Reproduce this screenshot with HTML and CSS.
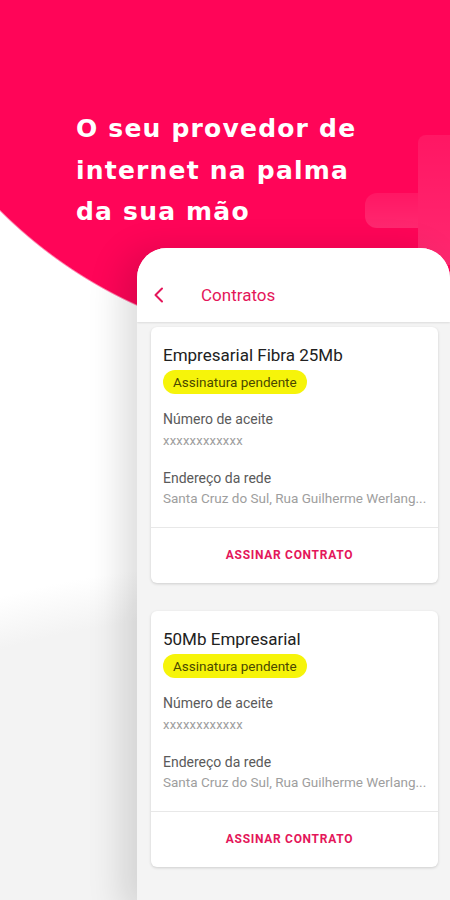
FILE: index.html
```html
<!DOCTYPE html>
<html lang="pt-BR">
<head>
    <meta charset="UTF-8">
    <meta name="viewport" content="width=device-width, initial-scale=1.0">
    <title>Contratos</title>
    <link rel="stylesheet" href="styles.css">
</head>
<body>
    <div class="page">
        <!-- decorative plus on the right of the pink area -->
        <div class="plus">
            <span class="plus-v"></span>
            <span class="plus-h"></span>
        </div>

        <h1 class="headline">O seu provedor de<br>internet na palma<br>da sua mão</h1>

        <div class="phone">
            <header class="app-bar">
                <svg class="back-icon" width="12" height="16" viewBox="0 0 12 16">
                    <path d="M9 1.5 L2.5 8 L9 14.5" fill="none" stroke="currentColor" stroke-width="2" stroke-linecap="round" stroke-linejoin="round"/>
                </svg>
                <span class="app-title">Contratos</span>
            </header>

            <main class="contract-list">
                <article class="contract-card">
                    <div class="card-body">
                        <h2 class="card-title">Empresarial Fibra 25Mb</h2>
                        <span class="status-badge">Assinatura pendente</span>
                        <div class="field">
                            <div class="field-label">Número de aceite</div>
                            <div class="field-value code">xxxxxxxxxxxx</div>
                        </div>
                        <div class="field">
                            <div class="field-label">Endereço da rede</div>
                            <div class="field-value">Santa Cruz do Sul, Rua Guilherme Werlang...</div>
                        </div>
                    </div>
                    <div class="card-action">
                        <button class="sign-btn">Assinar contrato</button>
                    </div>
                </article>

                <article class="contract-card">
                    <div class="card-body">
                        <h2 class="card-title">50Mb Empresarial</h2>
                        <span class="status-badge">Assinatura pendente</span>
                        <div class="field">
                            <div class="field-label">Número de aceite</div>
                            <div class="field-value code">xxxxxxxxxxxx</div>
                        </div>
                        <div class="field">
                            <div class="field-label">Endereço da rede</div>
                            <div class="field-value">Santa Cruz do Sul, Rua Guilherme Werlang...</div>
                        </div>
                    </div>
                    <div class="card-action">
                        <button class="sign-btn">Assinar contrato</button>
                    </div>
                </article>
            </main>
        </div>
    </div>
</body>
</html>
```

FILE: styles.css
```css
:root {
    --brand-pink: #ff0558;
    --accent: #e4165a;
    --badge-yellow: #f6f40a;
    --text-dark: #212121;
    --text-label: #5a5a5a;
    --text-muted: #9e9e9e;
    --screen-bg: #f4f4f4;
}

* {
    box-sizing: border-box;
}

body {
    margin: 0;
    font-family: Roboto, 'Noto Sans', sans-serif;
}

.page {
    position: relative;
    width: 450px;
    height: 900px;
    overflow: hidden;
    background:
        radial-gradient(circle 468px at 330px -120px, var(--brand-pink) 99.6%, transparent 100%),
        radial-gradient(circle 1021px at 265px 1583px, #f3f3f3 95%, rgba(243, 243, 243, 0) 100%),
        #ffffff;
}

/* Plus sign drawn on top of the pink circle */
.plus {
    position: absolute;
    top: 135px;
    left: 365px;
    width: 100px;
    height: 130px;
}

.plus-v,
.plus-h {
    position: absolute;
    background: linear-gradient(180deg, rgba(255, 255, 255, 0.07), rgba(255, 255, 255, 0.14));
}

.plus-v {
    left: 53px;
    top: 0;
    width: 60px;
    height: 130px;
    border-radius: 8px 0 0 0;
}

.plus-h {
    left: 0;
    top: 58px;
    width: 53px;
    height: 35px;
    border-radius: 12px 0 0 12px;
}

.headline {
    margin: 0;
    padding: 108px 0 0 76px;
    font-family: 'DejaVu Sans', sans-serif;
    font-weight: 700;
    font-size: 25px;
    line-height: 41.5px;
    letter-spacing: 1.2px;
    color: #ffffff;
}

/* Phone screen */
.phone {
    margin: 15px 0 0 137px;
    width: 313px;
    height: 660px;
    background: var(--screen-bg);
    border-radius: 30px 30px 0 0;
    overflow: hidden;
    box-shadow: -14px 4px 36px rgba(0, 0, 0, 0.14);
}

.app-bar {
    display: flex;
    align-items: center;
    height: 74px;
    padding: 20px 0 0 16px;
    background: #ffffff;
    color: var(--accent);
    box-shadow: 0 1px 2px rgba(0, 0, 0, 0.1);
    position: relative;
}

.back-icon {
    display: block;
}

.app-title {
    margin-left: 36px;
    font-size: 17px;
}

.contract-list {
    display: flex;
    flex-direction: column;
    gap: 28px;
    padding: 5px 12px 0 14px;
}

.contract-card {
    background: #ffffff;
    border-radius: 6px;
    box-shadow: 0 1px 3px rgba(0, 0, 0, 0.16);
}

.card-body {
    padding: 18px 4px 19px 12px;
    border-bottom: 1px solid #e8e8e8;
}

.card-title {
    margin: 0;
    font-size: 17px;
    font-weight: 400;
    line-height: 20px;
    color: var(--text-dark);
}

.status-badge {
    display: inline-block;
    margin-top: 5px;
    padding: 0 10px;
    height: 24px;
    line-height: 24px;
    border-radius: 12px;
    background: var(--badge-yellow);
    color: #4a4800;
    font-size: 13.5px;
}

.field {
    margin-top: 15px;
}

.field + .field {
    margin-top: 17px;
}

.field-label {
    font-size: 14px;
    line-height: 20px;
    color: var(--text-label);
}

.field-value {
    font-size: 13.5px;
    line-height: 20px;
    color: var(--text-muted);
    white-space: nowrap;
}

.field-value.code {
    font-size: 13px;
    margin-top: 2px;
    letter-spacing: 0.2px;
}

.card-action {
    display: flex;
    justify-content: center;
    padding-right: 10px;
}

.sign-btn {
    height: 55px;
    padding: 0 8px;
    border: none;
    background: none;
    font-family: inherit;
    font-size: 12px;
    font-weight: 700;
    letter-spacing: 0.7px;
    text-transform: uppercase;
    color: var(--accent);
    cursor: pointer;
}
```
